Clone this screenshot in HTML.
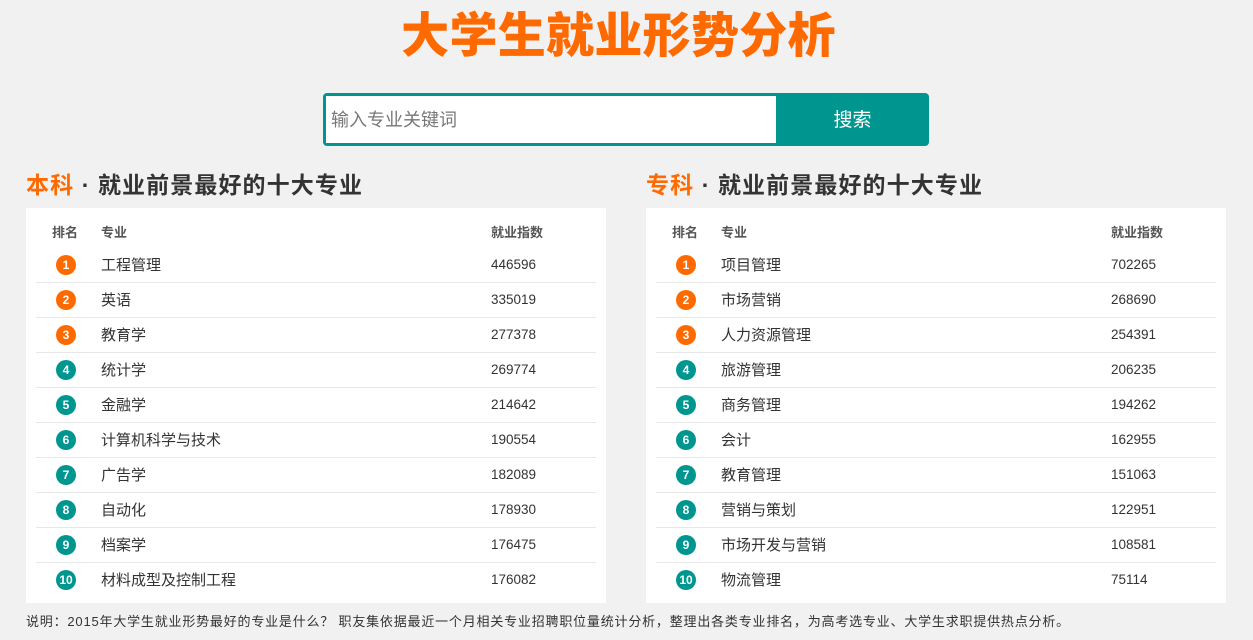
<!DOCTYPE html>
<html><head><meta charset="utf-8"><style>
*{margin:0;padding:0;box-sizing:border-box}
body{width:1253px;height:640px;background:#f1f1f1;font-family:"Liberation Sans","Noto Sans CJK SC",sans-serif;position:relative;overflow:hidden;color:#333}
h1{position:absolute;left:-8px;width:1253px;top:7px;text-align:center;font-size:48px;color:#ff6a00;font-weight:900;line-height:60px;letter-spacing:0.3px}
.search{position:absolute;left:323px;top:93px;width:606px;height:53px;background:#009690;border-radius:4px}
.search .in{position:absolute;left:3px;top:3px;width:450px;height:47px;background:#fff;font-size:18px;color:#777;line-height:49px;padding-left:5px}
.search .btn{position:absolute;left:453px;top:0;width:153px;height:53px;color:#fff;font-size:19px;line-height:55px;text-align:center}
.sec{position:absolute;top:170px;width:580px}
.sec h2{font-size:23px;font-weight:bold;line-height:30px;color:#333;letter-spacing:1.1px}
.sec h2 span{color:#ff6a00}
.panel{position:absolute;top:38px;left:0;width:580px;height:395px;background:#fff}
.hd{position:absolute;top:15px;font-size:13px;font-weight:bold;color:#555;line-height:20px}
.row{position:absolute;left:10px;width:560px;height:35px;border-bottom:1px solid #e8e8e8}
.row.last{border-bottom:none}
.c{position:absolute;left:20px;top:7px;width:20px;height:20px;border-radius:50%;color:#fff;font-size:12px;font-weight:bold;text-align:center;line-height:20px}
.o{background:#ff6a00}.g{background:#009690}
.n{position:absolute;left:65px;top:1px;line-height:34px;font-size:15px;color:#333}
.v{position:absolute;left:455px;top:0;line-height:34px;font-size:13.5px;color:#333}
.foot{position:absolute;left:26px;top:613px;font-size:13px;color:#333;line-height:18px;letter-spacing:0.8px}
</style></head><body>
<h1>大学生就业形势分析</h1>
<div class="search"><div class="in">输入专业关键词</div><div class="btn">搜索</div></div>

<div class="sec" style="left:26px">
<h2><span>本科</span> · 就业前景最好的十大专业</h2>
<div class="panel">
<div class="hd" style="left:26px">排名</div><div class="hd" style="left:75px">专业</div><div class="hd" style="left:465px">就业指数</div>
<div class="row" style="top:40px"><div class="c o">1</div><div class="n">工程管理</div><div class="v">446596</div></div>
<div class="row" style="top:75px"><div class="c o">2</div><div class="n">英语</div><div class="v">335019</div></div>
<div class="row" style="top:110px"><div class="c o">3</div><div class="n">教育学</div><div class="v">277378</div></div>
<div class="row" style="top:145px"><div class="c g">4</div><div class="n">统计学</div><div class="v">269774</div></div>
<div class="row" style="top:180px"><div class="c g">5</div><div class="n">金融学</div><div class="v">214642</div></div>
<div class="row" style="top:215px"><div class="c g">6</div><div class="n">计算机科学与技术</div><div class="v">190554</div></div>
<div class="row" style="top:250px"><div class="c g">7</div><div class="n">广告学</div><div class="v">182089</div></div>
<div class="row" style="top:285px"><div class="c g">8</div><div class="n">自动化</div><div class="v">178930</div></div>
<div class="row" style="top:320px"><div class="c g">9</div><div class="n">档案学</div><div class="v">176475</div></div>
<div class="row last" style="top:355px"><div class="c g">10</div><div class="n">材料成型及控制工程</div><div class="v">176082</div></div>
</div></div>

<div class="sec" style="left:646px">
<h2><span>专科</span> · 就业前景最好的十大专业</h2>
<div class="panel">
<div class="hd" style="left:26px">排名</div><div class="hd" style="left:75px">专业</div><div class="hd" style="left:465px">就业指数</div>
<div class="row" style="top:40px"><div class="c o">1</div><div class="n">项目管理</div><div class="v">702265</div></div>
<div class="row" style="top:75px"><div class="c o">2</div><div class="n">市场营销</div><div class="v">268690</div></div>
<div class="row" style="top:110px"><div class="c o">3</div><div class="n">人力资源管理</div><div class="v">254391</div></div>
<div class="row" style="top:145px"><div class="c g">4</div><div class="n">旅游管理</div><div class="v">206235</div></div>
<div class="row" style="top:180px"><div class="c g">5</div><div class="n">商务管理</div><div class="v">194262</div></div>
<div class="row" style="top:215px"><div class="c g">6</div><div class="n">会计</div><div class="v">162955</div></div>
<div class="row" style="top:250px"><div class="c g">7</div><div class="n">教育管理</div><div class="v">151063</div></div>
<div class="row" style="top:285px"><div class="c g">8</div><div class="n">营销与策划</div><div class="v">122951</div></div>
<div class="row" style="top:320px"><div class="c g">9</div><div class="n">市场开发与营销</div><div class="v">108581</div></div>
<div class="row last" style="top:355px"><div class="c g">10</div><div class="n">物流管理</div><div class="v">75114</div></div>
</div></div>

<div class="foot">说明：2015年大学生就业形势最好的专业是什么？ 职友集依据最近一个月相关专业招聘职位量统计分析，整理出各类专业排名，为高考选专业、大学生求职提供热点分析。</div>
</body></html>
